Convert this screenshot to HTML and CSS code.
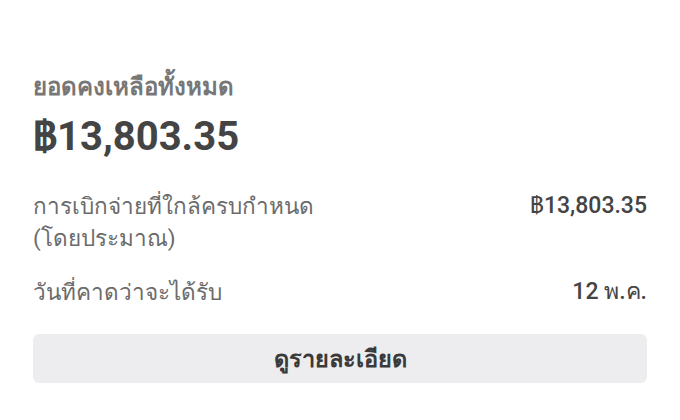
FILE: index.html
```html
<!DOCTYPE html>
<html lang="th">
<head>
    <meta charset="UTF-8">
    <meta name="viewport" content="width=device-width, initial-scale=1.0">
    <title>ยอดคงเหลือ</title>
    <link rel="stylesheet" href="styles.css">
</head>
<body>
    <div class="balance-card">
        <p class="balance-label">ยอดคงเหลือทั้งหมด</p>
        <p class="balance-amount">฿13,803.35</p>

        <div class="info-row">
            <span class="info-label">การเบิกจ่ายที่ใกล้ครบกำหนด<br>(โดยประมาณ)</span>
            <span class="info-value">฿13,803.35</span>
        </div>
        <div class="info-row">
            <span class="info-label">วันที่คาดว่าจะได้รับ</span>
            <span class="info-value">12 พ.ค.</span>
        </div>

        <button class="details-btn">ดูรายละเอียด</button>
    </div>
</body>
</html>
```

FILE: styles.css
```css
body {
    font-family: Roboto, "Noto Sans", sans-serif;
    background-color: #ffffff;
    color: #424242;
    margin: 0;
}
.balance-card {
    padding: 72px 33px 0 33px;
    display: flex;
    flex-direction: column;
}
.balance-label {
    margin: 0;
    font-size: 24px;
    font-weight: bold;
    color: #777777;
    line-height: 30px;
}
.balance-amount {
    margin: 12px 0 0 0;
    font-size: 40px;
    font-weight: bold;
    color: #444444;
    line-height: 46px;
}
.info-row {
    display: flex;
    justify-content: space-between;
    align-items: flex-start;
    margin-top: 30px;
    font-size: 22.5px;
    line-height: 32px;
}
.info-row + .info-row {
    margin-top: 22px;
}
.info-label {
    color: #6b6b6b;
}
.info-value {
    font-weight: 500;
    font-size: 23px;
    color: #444444;
}
.details-btn {
    margin-top: 26px;
    height: 49px;
    border: none;
    border-radius: 6px;
    background-color: #ededf0;
    font-family: inherit;
    font-size: 23.5px;
    font-weight: bold;
    color: #3a3a3a;
    cursor: pointer;
}
```
